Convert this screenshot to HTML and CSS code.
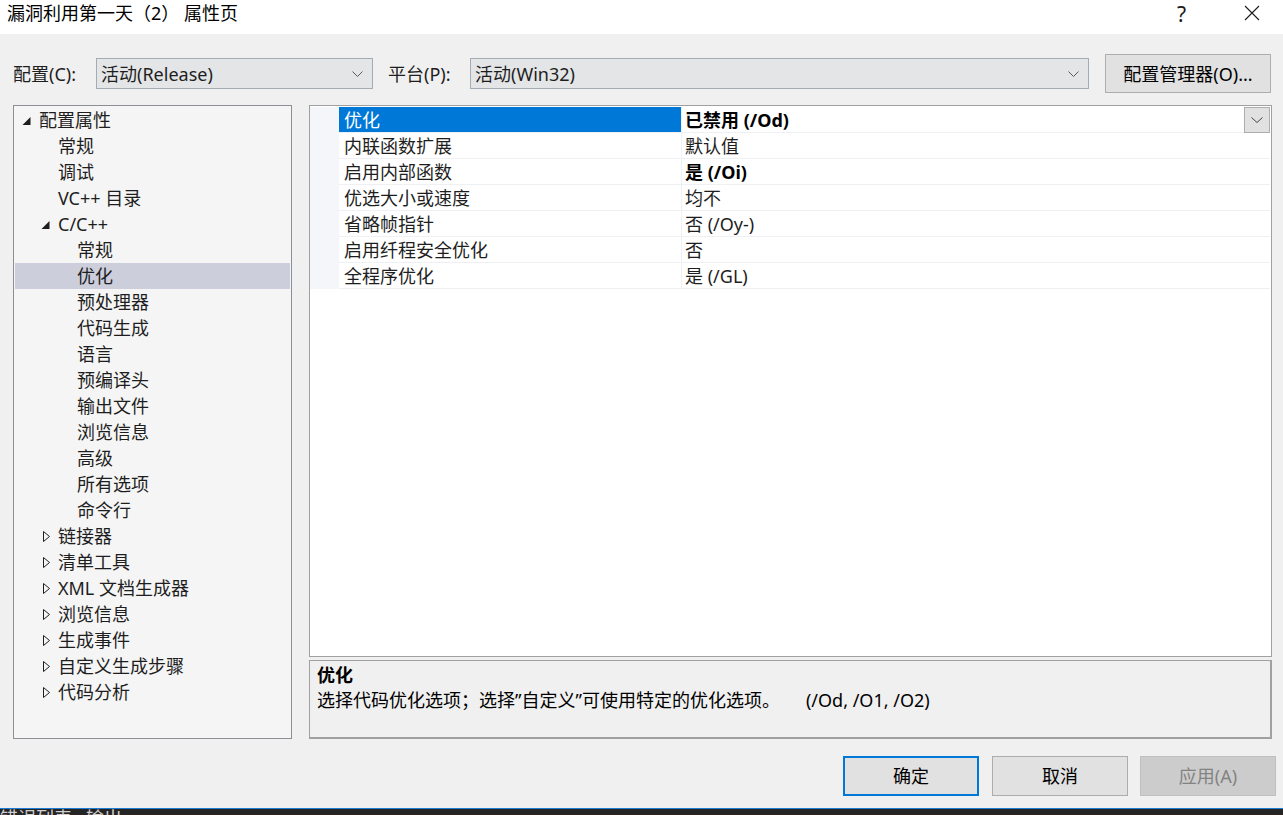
FILE: index.html
```html
<!DOCTYPE html>
<html lang="zh-CN">
<head>
<meta charset="utf-8">
<title>属性页</title>
<link rel="stylesheet" href="styles.css">
</head>
<body>
<div class="window">
  <div class="titlebar">
    <div class="title">漏洞利用第一天（2） 属性页</div>
    <div class="title-controls">
      <span class="help">?</span>
      <svg class="close" width="16" height="16" viewBox="0 0 16 16"><path d="M1 1 L15 15 M15 1 L1 15" stroke="#1a1a1a" stroke-width="1.1" fill="none"/></svg>
    </div>
  </div>
  <div class="main">
    <div class="config-row">
      <label class="cfg-label">配置(C):</label>
      <div class="combo combo-config">
        <span class="combo-text">活动(Release)</span>
        <svg class="chev" width="11" height="6" viewBox="0 0 11 6"><path d="M0.5 0.5 L5.5 5.5 L10.5 0.5" stroke="#5a5a5a" stroke-width="1" fill="none"/></svg>
      </div>
      <label class="cfg-label plat-label">平台(P):</label>
      <div class="combo combo-platform">
        <span class="combo-text">活动(Win32)</span>
        <svg class="chev" width="11" height="6" viewBox="0 0 11 6"><path d="M0.5 0.5 L5.5 5.5 L10.5 0.5" stroke="#5a5a5a" stroke-width="1" fill="none"/></svg>
      </div>
      <button class="btn cfg-manager">配置管理器(O)...</button>
    </div>

    <div class="content">
      <div class="tree">
        <div class="tnode l0"><svg class="arrow" width="18" height="26" viewBox="0 0 18 26"><path d="M9.5 10 L9.5 18 L1.5 18 Z" fill="#1e1e1e"/></svg><span>配置属性</span></div>
        <div class="tnode l1"><span class="noarrow"></span><span>常规</span></div>
        <div class="tnode l1"><span class="noarrow"></span><span>调试</span></div>
        <div class="tnode l1"><span class="noarrow"></span><span>VC++ 目录</span></div>
        <div class="tnode l1"><svg class="arrow" width="18" height="26" viewBox="0 0 18 26"><path d="M9.5 10 L9.5 18 L1.5 18 Z" fill="#1e1e1e"/></svg><span>C/C++</span></div>
        <div class="tnode l2"><span class="noarrow"></span><span>常规</span></div>
        <div class="tnode l2 selected"><span class="noarrow"></span><span>优化</span></div>
        <div class="tnode l2"><span class="noarrow"></span><span>预处理器</span></div>
        <div class="tnode l2"><span class="noarrow"></span><span>代码生成</span></div>
        <div class="tnode l2"><span class="noarrow"></span><span>语言</span></div>
        <div class="tnode l2"><span class="noarrow"></span><span>预编译头</span></div>
        <div class="tnode l2"><span class="noarrow"></span><span>输出文件</span></div>
        <div class="tnode l2"><span class="noarrow"></span><span>浏览信息</span></div>
        <div class="tnode l2"><span class="noarrow"></span><span>高级</span></div>
        <div class="tnode l2"><span class="noarrow"></span><span>所有选项</span></div>
        <div class="tnode l2"><span class="noarrow"></span><span>命令行</span></div>
        <div class="tnode l1"><svg class="arrow" width="18" height="26" viewBox="0 0 18 26"><path d="M3.5 8.5 L9.5 13.5 L3.5 18.5 Z" fill="none" stroke="#1e1e1e" stroke-width="1"/></svg><span>链接器</span></div>
        <div class="tnode l1"><svg class="arrow" width="18" height="26" viewBox="0 0 18 26"><path d="M3.5 8.5 L9.5 13.5 L3.5 18.5 Z" fill="none" stroke="#1e1e1e" stroke-width="1"/></svg><span>清单工具</span></div>
        <div class="tnode l1"><svg class="arrow" width="18" height="26" viewBox="0 0 18 26"><path d="M3.5 8.5 L9.5 13.5 L3.5 18.5 Z" fill="none" stroke="#1e1e1e" stroke-width="1"/></svg><span>XML 文档生成器</span></div>
        <div class="tnode l1"><svg class="arrow" width="18" height="26" viewBox="0 0 18 26"><path d="M3.5 8.5 L9.5 13.5 L3.5 18.5 Z" fill="none" stroke="#1e1e1e" stroke-width="1"/></svg><span>浏览信息</span></div>
        <div class="tnode l1"><svg class="arrow" width="18" height="26" viewBox="0 0 18 26"><path d="M3.5 8.5 L9.5 13.5 L3.5 18.5 Z" fill="none" stroke="#1e1e1e" stroke-width="1"/></svg><span>生成事件</span></div>
        <div class="tnode l1"><svg class="arrow" width="18" height="26" viewBox="0 0 18 26"><path d="M3.5 8.5 L9.5 13.5 L3.5 18.5 Z" fill="none" stroke="#1e1e1e" stroke-width="1"/></svg><span>自定义生成步骤</span></div>
        <div class="tnode l1"><svg class="arrow" width="18" height="26" viewBox="0 0 18 26"><path d="M3.5 8.5 L9.5 13.5 L3.5 18.5 Z" fill="none" stroke="#1e1e1e" stroke-width="1"/></svg><span>代码分析</span></div>
      </div>

      <div class="right">
        <div class="grid">
          <div class="prow selected">
            <div class="gutter"></div>
            <div class="pname">优化</div>
            <div class="pval bold"><span class="vtext">已禁用 (/Od)</span>
              <span class="ddbtn"><svg width="12" height="6" viewBox="0 0 12 6"><path d="M0.5 0.5 L6 5.5 L11.5 0.5" stroke="#444" stroke-width="1" fill="none"/></svg></span>
            </div>
          </div>
          <div class="prow"><div class="gutter"></div><div class="pname">内联函数扩展</div><div class="pval"><span class="vtext">默认值</span></div></div>
          <div class="prow"><div class="gutter"></div><div class="pname">启用内部函数</div><div class="pval bold"><span class="vtext">是 (/Oi)</span></div></div>
          <div class="prow"><div class="gutter"></div><div class="pname">优选大小或速度</div><div class="pval"><span class="vtext">均不</span></div></div>
          <div class="prow"><div class="gutter"></div><div class="pname">省略帧指针</div><div class="pval"><span class="vtext">否 (/Oy-)</span></div></div>
          <div class="prow"><div class="gutter"></div><div class="pname">启用纤程安全优化</div><div class="pval"><span class="vtext">否</span></div></div>
          <div class="prow"><div class="gutter"></div><div class="pname">全程序优化</div><div class="pval"><span class="vtext">是 (/GL)</span></div></div>
        </div>
        <div class="desc">
          <div class="desc-title">优化</div>
          <div class="desc-text">选择代码优化选项；选择”自定义”可使用特定的优化选项。<span class="desc-flags">(/Od, /O1, /O2)</span></div>
        </div>
      </div>
    </div>

    <div class="buttons">
      <button class="btn dlg ok">确定</button>
      <button class="btn dlg cancel">取消</button>
      <button class="btn dlg apply" disabled>应用(A)</button>
    </div>
  </div>
  <div class="strip"><span class="strip-text">错误列表&nbsp;&nbsp;&nbsp;输出</span></div>
</div>
</body>
</html>
```

FILE: styles.css
```css
* { box-sizing: border-box; }
html, body {
  margin: 0;
  padding: 0;
  width: 1283px;
  height: 815px;
  overflow: hidden;
  background: #f0f0f0;
}
body {
  font-family: "Noto Sans", "Noto Sans CJK SC", sans-serif;
  font-size: 18px;
  color: #000;
}
.window {
  width: 1283px;
  height: 815px;
  display: flex;
  flex-direction: column;
}

/* title bar */
.titlebar {
  height: 34px;
  background: #ffffff;
  display: flex;
  align-items: flex-start;
  justify-content: space-between;
  flex-shrink: 0;
}
.title {
  padding-left: 7px;
  padding-top: 1px;
  line-height: 24px;
  font-size: 18px;
  color: #000;
}
.title-controls {
  display: flex;
  align-items: center;
  height: 28px;
}
.help {
  font-family: "Noto Sans", sans-serif;
  font-size: 21px;
  line-height: 26px;
  color: #1a1a1a;
  margin-right: 58px;
}
.close {
  margin-right: 23px;
  margin-top: -2px;
}

/* main area */
.main {
  height: 774px;
  background: #f0f0f0;
  display: flex;
  flex-direction: column;
  flex-shrink: 0;
}
.config-row {
  margin-top: 20px;
  height: 39px;
  display: flex;
  align-items: center;
  padding-left: 13px;
}
.cfg-label {
  width: 83px;
  line-height: 26px;
  color: #1e1e1e;
}
.plat-label {
  margin-left: 15px;
  width: 82px;
}
.combo {
  height: 31px;
  background: #e4e5e7;
  border: 1px solid #a3acb5;
  display: flex;
  align-items: center;
  justify-content: space-between;
  padding-left: 4px;
  padding-right: 9px;
}
.combo-text {
  line-height: 26px;
  color: #1e1e1e;
}
.combo-config { width: 277px; }
.combo-platform { width: 619px; }
.chev { display: block; margin-top: 1px; }

.btn {
  font-family: "Noto Sans", "Noto Sans CJK SC", sans-serif;
  font-size: 18px;
  background: #e1e1e1;
  border: 1px solid #adadad;
  color: #000;
  padding: 0;
  margin: 0;
  border-radius: 0;
  line-height: 26px;
}
.cfg-manager {
  margin-left: 16px;
  width: 166px;
  height: 39px;
}

/* content */
.content {
  margin-top: 12px;
  height: 634px;
  display: flex;
  padding-left: 13px;
}
.tree {
  width: 279px;
  height: 634px;
  background: #f5f5f5;
  border: 1px solid #8c8f94;
  padding: 1px;
}
.tnode {
  height: 26px;
  display: flex;
  align-items: center;
  line-height: 26px;
  color: #1e1e1e;
  white-space: nowrap;
}
.tnode.l0 { padding-left: 6px; }
.tnode.l1 { padding-left: 25px; }
.tnode.l2 { padding-left: 44px; }
.tnode.selected { background: #cccedb; }
.arrow { display: block; flex-shrink: 0; }
.noarrow { display: block; width: 18px; flex-shrink: 0; }

.right {
  margin-left: 17px;
  width: 963px;
  display: flex;
  flex-direction: column;
}
.grid {
  height: 552px;
  background: #ffffff;
  border: 1px solid #a0a0a0;
  padding-top: 1px;
  padding-right: 1px;
}
.prow {
  height: 26px;
  display: flex;
}
.gutter {
  width: 29px;
  background: #f4f6f9;
  flex-shrink: 0;
}
.pname {
  width: 343px;
  padding-left: 5px;
  padding-top: 1px;
  line-height: 24px;
  border-bottom: 1px solid #eef0f4;
  border-right: 1px solid #eef0f4;
  color: #1e1e1e;
  flex-shrink: 0;
}
.pval {
  flex: 1;
  padding-left: 3px;
  border-bottom: 1px solid #eef0f4;
  display: flex;
  align-items: flex-start;
  justify-content: space-between;
  color: #1e1e1e;
}
.vtext {
  padding-top: 1px;
  line-height: 24px;
}
.pval.bold { font-weight: 700; color: #000; }
.prow.selected .pname {
  background: #0078d7;
  color: #ffffff;
}
.ddbtn {
  width: 26px;
  height: 26px;
  background: #e1e1e1;
  border: 1px solid #adadad;
  display: flex;
  align-items: center;
  justify-content: center;
}
.ddbtn svg { display: block; }

.desc {
  margin-top: 3px;
  height: 79px;
  background: #f0f0f0;
  border-top: 1px solid #a0a0a0;
  border-left: 1px solid #a0a0a0;
  border-right: 2px solid #a0a0a0;
  border-bottom: 2px solid #a0a0a0;
  padding-left: 7px;
  padding-top: 2px;
}
.desc-title {
  font-weight: 700;
  line-height: 24px;
}
.desc-text {
  line-height: 26px;
  color: #000;
  white-space: nowrap;
}
.desc-flags {
  margin-left: 26px;
}

/* dialog buttons */
.buttons {
  margin-top: 17px;
  height: 40px;
  display: flex;
  justify-content: flex-end;
  padding-right: 7px;
}
.dlg {
  width: 136px;
  height: 40px;
}
.ok {
  border: 2px solid #0078d7;
}
.cancel { margin-left: 13px; }
.apply {
  margin-left: 12px;
  background: #cccccc;
  border-color: #bfbfbf;
  color: #838383;
}

/* bottom strip */
.strip {
  height: 7px;
  background: #252526;
  border-top: 1px solid #1c7cd5;
  overflow: hidden;
  flex-shrink: 0;
}
.strip-text {
  display: block;
  font-size: 18px;
  line-height: 18px;
  color: #d0d0d0;
  white-space: nowrap;
}
```
